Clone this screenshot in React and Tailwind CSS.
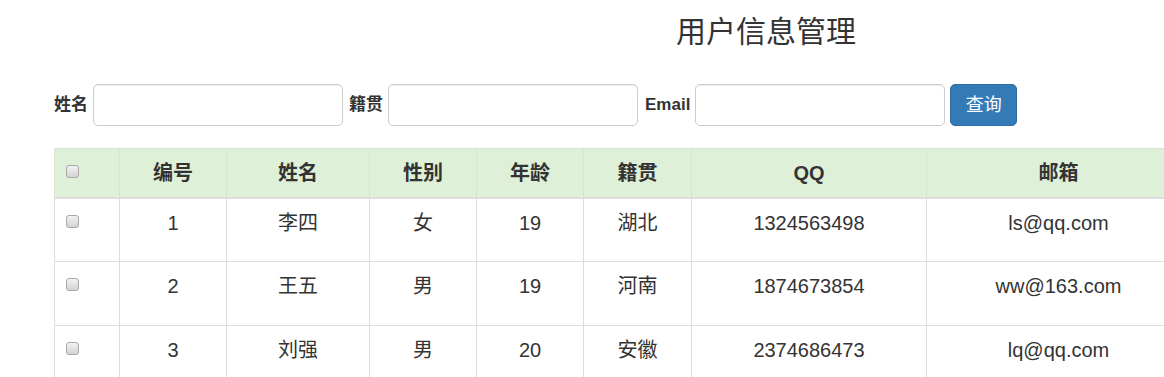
import React from "react";

const rows = [
  { id: 1, name: "李四", sex: "女", age: 19, place: "湖北", qq: "1324563498", mail: "ls@qq.com" },
  { id: 2, name: "王五", sex: "男", age: 19, place: "河南", qq: "1874673854", mail: "ww@163.com" },
  { id: 3, name: "刘强", sex: "男", age: 20, place: "安徽", qq: "2374686473", mail: "lq@qq.com" },
];

function Box() {
  return (
    <span className="inline-block w-[13px] h-[13px] rounded-[3px] border border-[#a9a9a9] bg-gradient-to-b from-[#f2f2f2] to-[#d4d4d4] align-top" />
  );
}

const FONT = { fontFamily: '"Liberation Sans", Arial, "Noto Sans CJK SC", sans-serif' };

export default function App() {
  const widths = [65, 107, 143, 107, 107, 108, 235, 264];
  return (
    <div className="w-[1164px] h-[377px] overflow-hidden bg-white text-[#333]" style={FONT}>
      <div className="w-[1532px] px-[54px]">
        <h3 className="text-center text-[30px] leading-[36px] pt-[14px] font-normal text-[#333]">用户信息管理</h3>
        <div className="flex items-center mt-[34px] h-[42px]">
          <label className="text-[17px] font-bold mr-[5px]">姓名</label>
          <input className="w-[250px] h-[42px] border border-[#ccc] rounded-[5px] shadow-[inset_0_1px_1px_rgba(0,0,0,0.075)]" />
          <label className="text-[17px] font-bold ml-[6px] mr-[5px]">籍贯</label>
          <input className="w-[250px] h-[42px] border border-[#ccc] rounded-[5px] shadow-[inset_0_1px_1px_rgba(0,0,0,0.075)]" />
          <label className="text-[17px] font-bold ml-[7px] mr-[5px]">Email</label>
          <input className="w-[250px] h-[42px] border border-[#ccc] rounded-[5px] shadow-[inset_0_1px_1px_rgba(0,0,0,0.075)]" />
          <button className="ml-[5px] w-[67px] h-[42px] rounded-[5px] bg-[#337ab7] border border-[#2e6da4] text-white text-[18px]">查询</button>
        </div>
        <table className="mt-[22px] table-fixed border-collapse text-[20px]" style={{ width: 1136 }}>
          <colgroup>
            {widths.map((w, i) => (
              <col key={i} style={{ width: w }} />
            ))}
          </colgroup>
          <thead>
            <tr className="bg-[#dff0d8] h-[49px]">
              <th className="border border-[#d6e5cf] border-b-2 border-b-[#ddd] text-left align-top pl-[11px] pt-[16px]"><Box /></th>
              {["编号", "姓名", "性别", "年龄", "籍贯", "QQ", "邮箱"].map((h) => (
                <th key={h} className="border border-[#d6e5cf] border-b-2 border-b-[#ddd] text-center font-bold align-middle">{h}</th>
              ))}
            </tr>
          </thead>
          <tbody>
            {rows.map((r) => (
              <tr key={r.id} className="h-[64px]">
                <td className="border border-[#ddd] align-top pl-[11px] pt-[16px]"><Box /></td>
                {[r.id, r.name, r.sex, r.age, r.place, r.qq, r.mail].map((v, i) => (
                  <td key={i} className="border border-[#ddd] text-center align-top pt-[10px] leading-[28px]">{v}</td>
                ))}
              </tr>
            ))}
          </tbody>
        </table>
      </div>
    </div>
  );
}
